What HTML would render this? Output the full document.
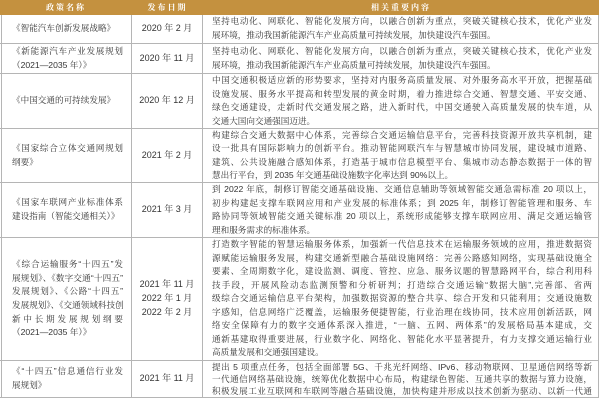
<!DOCTYPE html>
<html><head><meta charset="utf-8"><style>
*{margin:0;padding:0;box-sizing:border-box}
body{width:600px;height:400px;overflow:hidden;background:#fff;font-family:"Liberation Sans","Noto Serif CJK SC",serif;color:#333;position:relative}
.hd{position:absolute;top:0;left:0;width:599px;height:15px;background:#c4913f}
.hd div{position:absolute;top:0;height:15px;line-height:15px;color:#fff;font-weight:bold;font-size:8px;text-align:center;letter-spacing:2px}
.row{position:absolute;left:0;width:599px;border-bottom:1px solid #b5b5b5}
.c{position:absolute;top:0;bottom:0;display:flex;flex-direction:column;justify-content:center}
.c1{left:1px;width:131px;padding:0 8px 0 10px;border-left:1px solid #b5b5b5;border-right:1px solid #b5b5b5}
.c2{left:132px;width:71px;text-align:center;border-right:1px solid #b5b5b5;font-size:9px;line-height:13.7px}
.c3{left:203px;width:396px;padding:0 6px 0 9px;border-right:1px solid #b5b5b5}
.l{font-size:8.6px;line-height:13.7px;white-space:nowrap;text-align:justify;text-align-last:justify;overflow:hidden}
.e{text-align-last:left}
</style></head><body>
<div class="hd"><div style="left:0;width:132px">政策名称</div><div style="left:132px;width:71px">发布日期</div><div style="left:203px;width:396px">相关重要内容</div></div>

<div class="row" style="top:15px;height:29px">
<div class="c c1"><div class="l e">《智能汽车创新发展战略》</div></div>
<div class="c c2">2020 年 2 月</div>
<div class="c c3"><div class="l">坚持电动化、网联化、智能化发展方向，以融合创新为重点，突破关键核心技术，优化产业发</div><div class="l e">展环境，推动我国新能源汽车产业高质量可持续发展，加快建设汽车强国。</div></div>
</div>

<div class="row" style="top:44px;height:30px">
<div class="c c1"><div class="l">《新能源汽车产业发展规划</div><div class="l e">（2021—2035 年）》</div></div>
<div class="c c2">2020 年 11 月</div>
<div class="c c3"><div class="l">坚持电动化、网联化、智能化发展方向，以融合创新为重点，突破关键核心技术，优化产业发</div><div class="l e">展环境，推动我国新能源汽车产业高质量可持续发展，加快建设汽车强国。</div></div>
</div>

<div class="row" style="top:74px;height:55px">
<div class="c c1"><div class="l e">《中国交通的可持续发展》</div></div>
<div class="c c2">2020 年 12 月</div>
<div class="c c3"><div class="l">中国交通积极适应新的形势要求，坚持对内服务高质量发展、对外服务高水平开放，把握基础</div><div class="l">设施发展、服务水平提高和转型发展的黄金时期，着力推进综合交通、智慧交通、平安交通、</div><div class="l">绿色交通建设，走新时代交通发展之路，进入新时代，中国交通驶入高质量发展的快车道，从</div><div class="l e">交通大国向交通强国迈进。</div></div>
</div>

<div class="row" style="top:129px;height:54px">
<div class="c c1"><div class="l">《国家综合立体交通网规划</div><div class="l e">纲要》</div></div>
<div class="c c2">2021 年 2 月</div>
<div class="c c3"><div class="l">构建综合交通大数据中心体系，完善综合交通运输信息平台，完善科技资源开放共享机制，建</div><div class="l">设一批具有国际影响力的创新平台。推动智能网联汽车与智慧城市协同发展，建设城市道路、</div><div class="l">建筑、公共设施融合感知体系，打造基于城市信息模型平台、集城市动态静态数据于一体的智</div><div class="l e">慧出行平台，到 2035 年交通基础设施数字化率达到 90%以上。</div></div>
</div>

<div class="row" style="top:183px;height:55px">
<div class="c c1"><div class="l">《国家车联网产业标准体系</div><div class="l e">建设指南（智能交通相关）》</div></div>
<div class="c c2">2021 年 3 月</div>
<div class="c c3"><div class="l">到 2022 年底，制修订智能交通基础设施、交通信息辅助等领域智能交通急需标准 20 项以上，</div><div class="l">初步构建起支撑车联网应用和产业发展的标准体系；到 2025 年，制修订智能管理和服务、车</div><div class="l">路协同等领域智能交通关键标准 20 项以上，系统形成能够支撑车联网应用、满足交通运输管</div><div class="l e">理和服务需求的标准体系。</div></div>
</div>

<div class="row" style="top:238px;height:123px">
<div class="c c1"><div class="l">《综合运输服务“十四五”发</div><div class="l">展规划》、《数字交通“十四五”</div><div class="l">发展规划》、《公路“十四五”</div><div class="l">发展规划》、《交通领域科技创</div><div class="l">新中长期发展规划纲要</div><div class="l e">（2021—2035 年）》</div></div>
<div class="c c2"><div>2021 年 11 月</div><div>2022 年 1 月</div><div>2022 年 2 月</div></div>
<div class="c c3"><div class="l">打造数字智能的智慧运输服务体系，加强新一代信息技术在运输服务领域的应用，推进数据资</div><div class="l">源赋能运输服务发展，构建交通新型融合基础设施网络：完善公路感知网络，实现基础设施全</div><div class="l">要素、全周期数字化，建设监测、调度、管控、应急、服务议题的智慧路网平台，综合利用科</div><div class="l">技手段，开展风险动态监测预警和分析研判；打造综合交通运输“数据大脑”,完善部、省两</div><div class="l">级综合交通运输信息平台架构，加强数据资源的整合共享、综合开发和只能利用；交通设施数</div><div class="l">字感知，信息网络广泛覆盖，运输服务便捷智能，行业治理在线协同，技术应用创新活跃，网</div><div class="l">络安全保障有力的数字交通体系深入推进，“一脑、五网、两体系”的发展格局基本建成，交</div><div class="l">通新基建取得重要进展，行业数字化、网络化、智能化水平显著提升，有力支撑交通运输行业</div><div class="l e">高质量发展和交通强国建设。</div></div>
</div>

<div class="row" style="top:361px;height:37px">
<div class="c c1"><div class="l">《“十四五”信息通信行业发</div><div class="l e">展规划》</div></div>
<div class="c c2">2021 年 11 月</div>
<div class="c c3" style="justify-content:flex-start;padding-top:0"><div class="l">提出 5 项重点任务，包括全面部署 5G、千兆光纤网络、IPv6、移动物联网、卫星通信网络等新</div><div class="l">一代通信网络基础设施，统筹优化数据中心布局，构建绿色智能、互通共享的数据与算力设施，</div><div class="l">积极发展工业互联网和车联网等融合基础设施，加快构建并形成以技术创新为驱动、以新一代通</div></div>
</div>
</body></html>
